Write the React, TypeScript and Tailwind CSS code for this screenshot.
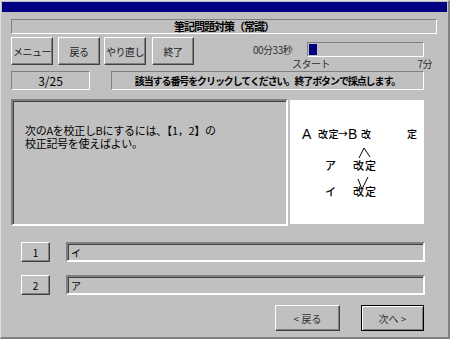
const sunken = "border border-t-[#808080] border-l-[#808080] border-b-white border-r-white";
const sunken2 =
  "border-2 border-t-[#808080] border-l-[#808080] border-b-white border-r-[#ffffff] shadow-[inset_1px_1px_#404040]";
const raised =
  "border border-t-white border-l-white border-b-[#404040] border-r-[#404040] shadow-[inset_-1px_-1px_#808080] flex items-center justify-center";

function ToolButton({ label, className }: { label: string; className?: string }) {
  return (
    <div className={`${raised} w-[42px] h-[28px] text-[10px] tracking-[-0.5px] text-[#202020] ${className ?? ""}`}>
      {label}
    </div>
  );
}

function Picture() {
  return (
    <svg width="134" height="124" viewBox="0 0 134 124" className="font-['Noto_Sans_CJK_JP',sans-serif]">
      <g fill="#000" fontWeight="500">
        <text x="12" y="39" fontSize="14" fontFamily="Liberation Sans, sans-serif">A</text>
        <text x="28" y="38" fontSize="10" letterSpacing="0.5">改定</text>
        <text x="48" y="38" fontSize="10">→</text>
        <text x="58" y="39" fontSize="14" fontFamily="Liberation Sans, sans-serif">B</text>
        <text x="71" y="38" fontSize="10">改</text>
        <text x="117" y="38" fontSize="10">定</text>
        <text x="35" y="70" fontSize="11">ア</text>
        <text x="63" y="70" fontSize="11" letterSpacing="1">改定</text>
        <text x="35" y="96" fontSize="11">イ</text>
        <text x="63" y="96" fontSize="11" letterSpacing="1">改定</text>
      </g>
      <path d="M69 58 L74 48 L80 57" stroke="#000" strokeWidth="1" fill="none" />
      <path d="M68 79 L72 89 L78 77" stroke="#000" strokeWidth="1" fill="none" />
    </svg>
  );
}

export default function App() {
  return (
    <div className="w-[450px] h-[339px] bg-[#c0c0c0] border-t border-l border-t-[#dfdfdf] border-l-[#dfdfdf] border-r-2 border-b-2 border-r-[#808080] border-b-[#808080] p-[1px] font-['Noto_Sans_CJK_JP',sans-serif] text-black overflow-hidden">
      {/* title bar */}
      <div className="h-[10px] bg-[#000080]" />

      <div className="pl-[9px]">
        {/* heading */}
        <div className={`${sunken} mt-[7px] w-[426px] h-[15px] flex items-center justify-center text-[11px] font-bold tracking-[-1px] leading-none`}>
          筆記問題対策（常識）
        </div>

        {/* toolbar + timer */}
        <div className="mt-[3px] flex items-start h-[28px]">
          <ToolButton label="メニュー" />
          <ToolButton label="戻る" className="ml-[5px]" />
          <ToolButton label="やり直し" className="ml-[4px]" />
          <ToolButton label="終了" className="ml-[6px]" />

          <div className="ml-[59px] flex items-start">
            <div className="mt-[8px] w-[40px] text-[10px] tracking-[-0.5px] leading-none text-[#303030]">00分33秒</div>
            <div className="ml-[14px] mt-[5px] flex flex-col">
              <div className={`${sunken} w-[117px] h-[15px] p-[1px]`}>
                <div className="w-[8px] h-full bg-[#000080]" />
              </div>
              <div className="-ml-[15px] w-[140px] flex justify-between text-[10px] tracking-[-0.5px] leading-none mt-[2px] text-[#303030]">
                <span>スタート</span>
                <span>7分</span>
              </div>
            </div>
          </div>
        </div>

        {/* counter + instructions */}
        <div className="mt-[6px] flex">
          <div className={`${sunken} w-[79px] h-[19px] flex items-center justify-center text-[12px] leading-none`}>3/25</div>
          <div className={`${sunken} ml-[21px] w-[313px] h-[19px] flex items-center justify-center text-[10px] font-bold tracking-[-1.1px] leading-none`}>
            該当する番号をクリックしてください。終了ボタンで採点します。
          </div>
        </div>

        {/* question + picture */}
        <div className="mt-[9px] flex items-start">
          <div className={`${sunken2} w-[277px] h-[127px] pl-[12px] pt-[23px] text-[11px] leading-[13px] tracking-[-0.3px]`}>
            <div>次のAを校正しBにするには、【1，2】の</div>
            <div>校正記号を使えばよい。</div>
          </div>
          <div className="ml-[2px] mt-[1px] w-[134px] h-[124px] bg-white">
            <Picture />
          </div>
        </div>

        {/* answers */}
        <div className="mt-[16px] flex items-center">
          <div className={`${raised} ml-[10px] w-[29px] h-[20px] text-[10px]`}>1</div>
          <div className={`${sunken2} ml-[16px] w-[359px] h-[20px] pl-[3px] flex items-center text-[10px]`}>イ</div>
        </div>
        <div className="mt-[13px] flex items-center">
          <div className={`${raised} ml-[10px] w-[29px] h-[20px] text-[10px]`}>2</div>
          <div className={`${sunken2} ml-[16px] w-[359px] h-[20px] pl-[3px] flex items-center text-[10px]`}>ア</div>
        </div>

        {/* navigation */}
        <div className="mt-[10px] flex">
          <div className={`${raised} ml-[264px] w-[65px] h-[26px] text-[10px] text-[#303030]`}>&lt; 戻る</div>
          <div className="ml-[21px] w-[63px] h-[26px] border border-black shadow-[inset_1px_1px_white,inset_-1px_-1px_#808080] flex items-center justify-center text-[10px] text-[#303030]">
            次へ &gt;
          </div>
        </div>
      </div>
    </div>
  );
}
